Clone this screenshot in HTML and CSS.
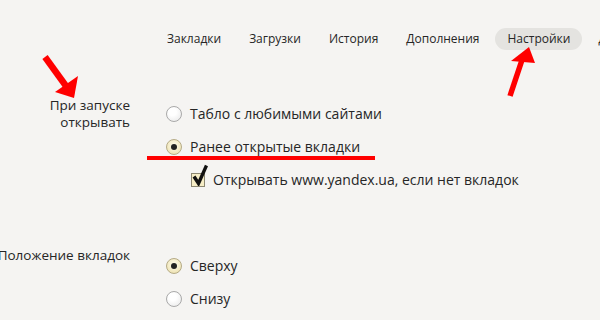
FILE: index.html
```html
<!doctype html>
<html>
	<head>
		<title>Настройки</title>
		<meta charset="utf-8" />
		<link rel="stylesheet" href="styles.css">
	</head>
	<body>
		<div class="nav">
			<span class="tab">Закладки</span>
			<span class="tab">Загрузки</span>
			<span class="tab">История</span>
			<span class="tab">Дополнения</span>
			<span class="tab active">Настройки</span>
			<span class="tab">Другие</span>
		</div>
		<div class="section">
			<div class="label">При запуске<br>открывать</div>
			<div class="options">
				<div class="row"><span class="radio"></span>Табло с любимыми сайтами</div>
				<div class="row"><span class="radio on"></span>Ранее открытые вкладки</div>
				<div class="row sub"><span class="check"><svg width="16" height="22" viewBox="0 0 16 22"><path d="M2 12.5 L6.5 19.5 L14.5 1.5" fill="none" stroke="#111" stroke-width="3.4"/></svg></span>Открывать www.yandex.ua, если нет вкладок</div>
			</div>
		</div>
		<div class="section second">
			<div class="label">Положение вкладок</div>
			<div class="options">
				<div class="row"><span class="radio on"></span>Сверху</div>
				<div class="row"><span class="radio"></span>Снизу</div>
			</div>
		</div>
		<svg class="marks" width="600" height="320" viewBox="0 0 600 320">
			<!-- left arrow -->
			<line x1="45" y1="57" x2="66" y2="86" stroke="#f00" stroke-width="6.5"/>
			<polygon points="74,98 55,92 78,76" fill="#f00"/>
			<!-- right arrow -->
			<line x1="510" y1="96" x2="522" y2="60" stroke="#f00" stroke-width="5.5"/>
			<polygon points="529,47 511,61 535,63" fill="#f00"/>
			<!-- underline -->
			<rect x="147" y="156" width="228" height="4" fill="#f00"/>
		</svg>
	</body>
</html>
```

FILE: styles.css
```css
* { margin: 0; padding: 0; box-sizing: border-box; }
body { background: #f5f4f2; color: #262626; font-family: "Open Sans", "Noto Sans", sans-serif; font-size: 14px; width: 600px; height: 320px; overflow: hidden; position: relative; }

.nav { display: flex; gap: 4px; margin-top: 28px; padding-left: 155px; white-space: nowrap; }
.tab { display: block; height: 22px; line-height: 22px; padding: 0 12px; border-radius: 11px; font-size: 12px; }
.tab.active { background: #e4e3e0; }

.section { display: grid; grid-template-columns: 130px auto; column-gap: 36px; margin-top: 47px; }
.section.second { margin-top: 53px; }
.label { display: flex; justify-content: flex-end; text-align: right; white-space: nowrap; line-height: 17px; font-size: 13.5px; }
.second .label { margin-top: -2px; }
.options { display: flex; flex-direction: column; }
.row { display: flex; align-items: center; height: 33px; gap: 8px; font-size: 14px; white-space: nowrap; }
.row.sub { padding-left: 25px; }

.radio { width: 16px; height: 16px; border-radius: 50%; border: 1px solid #a9a9a9; background: radial-gradient(circle at 40% 35%, #fff 30%, #e6e6e6 100%); display: flex; align-items: center; justify-content: center; }
.radio.on { border-color: #b5ab86; background: radial-gradient(circle at 50% 40%, #fbf6df 20%, #e9dca4 100%); }
.radio.on::after { content: ""; width: 6px; height: 6px; border-radius: 50%; background: #222; }

.check { position: relative; width: 14px; height: 14px; border: 1px solid #8c8772; background: #f6edc6; margin-top: 1px; }
.check svg { position: absolute; left: 0; top: -10px; }

.marks { position: absolute; left: 0; top: 0; pointer-events: none; }
```
